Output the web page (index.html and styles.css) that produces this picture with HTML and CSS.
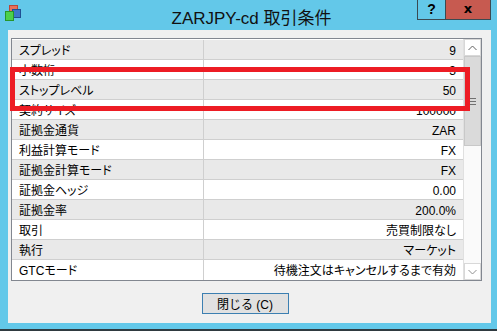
FILE: index.html
```html
<!DOCTYPE html>
<html lang="ja">
<head>
    <meta charset="UTF-8">
    <title>ZARJPY-cd 取引条件</title>
    <link rel="stylesheet" href="styles.css">
</head>
<body>

<div class="window">
    <div class="titlebar">
        <svg class="app-icon" width="18" height="18" viewBox="0 0 18 18">
            <rect x="5.5" y="1.5" width="8" height="7" fill="#e8705a" stroke="#b9473a"/>
            <rect x="8.5" y="5.5" width="8" height="8" fill="#3c78c8" stroke="#1f4f93"/>
            <rect x="1.5" y="7.5" width="8" height="9" fill="#4cd04a" stroke="#27962a"/>
        </svg>
        <div class="title">ZARJPY-cd 取引条件</div>
        <div class="caption-buttons">
            <div class="btn-help">?</div>
            <div class="btn-close">x</div>
        </div>
    </div>

    <div class="panel">
        <div class="listbox">
            <div class="rows">
                <div class="row"><span class="name">スプレッド</span><span class="value">9</span></div>
                <div class="row"><span class="name">小数桁</span><span class="value">3</span></div>
                <div class="row"><span class="name">ストップレベル</span><span class="value">50</span></div>
                <div class="row"><span class="name">契約サイズ</span><span class="value">100000</span></div>
                <div class="row"><span class="name">証拠金通貨</span><span class="value">ZAR</span></div>
                <div class="row"><span class="name">利益計算モード</span><span class="value">FX</span></div>
                <div class="row"><span class="name">証拠金計算モード</span><span class="value">FX</span></div>
                <div class="row"><span class="name">証拠金ヘッジ</span><span class="value">0.00</span></div>
                <div class="row"><span class="name">証拠金率</span><span class="value">200.0%</span></div>
                <div class="row"><span class="name">取引</span><span class="value">売買制限なし</span></div>
                <div class="row"><span class="name">執行</span><span class="value">マーケット</span></div>
                <div class="row"><span class="name">GTCモード</span><span class="value">待機注文はキャンセルするまで有効</span></div>
            </div>
            <div class="scrollbar">
                <div class="arrow arrow-up">
                    <svg width="9" height="6" viewBox="0 0 9 6"><path d="M0.5 5 L4.5 1 L8.5 5" fill="none" stroke="#606060"/></svg>
                </div>
                <div class="thumb"><span class="grip"></span></div>
                <div class="track"></div>
                <div class="arrow arrow-down">
                    <svg width="9" height="6" viewBox="0 0 9 6"><path d="M0.5 1 L4.5 5 L8.5 1" fill="none" stroke="#909090"/></svg>
                </div>
            </div>
        </div>

        <div class="footer">
            <button class="close-button">閉じる (C)</button>
        </div>

        <!-- 強調枠 -->
        <div class="highlight"></div>
    </div>
</div>

</body>
</html>
```

FILE: styles.css
```css
body {
    margin: 0;
    padding: 0;
    font-family: "Liberation Sans", "Noto Sans CJK JP", sans-serif;
    background-color: #63c8e9;
}
.window {
    width: 497px;
    height: 331px;
    box-sizing: border-box;
    background-color: #63c8e9;
    border-bottom: 2px solid #2f3a40;
    display: flex;
    flex-direction: column;
}
.titlebar {
    height: 30px;
    display: flex;
    align-items: flex-start;
    position: relative;
}
.app-icon {
    margin: 4px 0 0 4px;
}
.title {
    position: absolute;
    left: 0;
    right: 0;
    top: 4px;
    padding-left: 6px;
    text-align: center;
    font-family: "Liberation Sans", "Noto Sans CJK JP", sans-serif;
    font-size: 17px;
    color: #111;
    pointer-events: none;
}
.caption-buttons {
    margin-left: auto;
    margin-right: 6px;
    display: flex;
}
.btn-help,
.btn-close {
    height: 19px;
    border: 1px solid #3a4a52;
    border-top: none;
    font-weight: bold;
    font-size: 14px;
    text-align: center;
    line-height: 18px;
    color: #000;
}
.btn-help {
    width: 27px;
    border-right: none;
}
.btn-close {
    width: 44px;
    background-color: #c75a50;
    font-family: "DejaVu Sans", sans-serif;
    font-size: 13px;
}
.panel {
    margin: 0 6px 0 8px;
    height: 293px;
    background-color: #f0f0f0;
    padding: 8px 9px 0 3px;
    box-sizing: border-box;
    position: relative;
}
.listbox {
    height: 243px;
    box-sizing: border-box;
    border: 1px solid #828790;
    padding: 1px 0 0 0;
    background-color: #fff;
    display: flex;
}
.rows {
    flex: 1;
    display: flex;
    flex-direction: column;
}
.row {
    height: 20px;
    box-sizing: border-box;
    border-bottom: 1px solid #cfcfcf;
    display: flex;
    font-size: 12px;
    line-height: 19px;
    color: #000;
    font-feature-settings: "palt";
}
.row:nth-child(odd) {
    background-color: #e9e9e9;
}
.row:last-child {
    border-bottom: none;
}
.name {
    width: 192px;
    padding-top: 2px;
    padding-left: 7px;
    box-sizing: border-box;
    border-right: 1px solid #cfcfcf;
}
.value {
    flex: 1;
    padding-top: 2px;
    text-align: right;
    padding-right: 7px;
}
.scrollbar {
    width: 17px;
    margin-top: -1px;
    display: flex;
    flex-direction: column;
    background-color: #f0f0f0;
    border-left: 1px solid #e0e0e0;
}
.arrow {
    height: 17px;
    display: flex;
    align-items: center;
    justify-content: center;
    background-color: #fff;
    border: 1px solid #d8d8d8;
    box-sizing: border-box;
}
.thumb {
    height: 90px;
    background-color: #dadada;
    border: 1px solid #c8c8c8;
    box-sizing: border-box;
    display: flex;
    align-items: center;
    justify-content: center;
}
.grip {
    width: 7px;
    height: 5px;
    border-top: 1px solid #707070;
    border-bottom: 1px solid #707070;
    position: relative;
}
.grip::after {
    content: "";
    position: absolute;
    left: 0;
    right: 0;
    top: 2px;
    border-top: 1px solid #707070;
}
.track {
    flex: 1;
    background-color: #fafafa;
}
.footer {
    display: flex;
    justify-content: center;
    padding-top: 12px;
    padding-right: 3px;
}
.close-button {
    width: 87px;
    height: 21px;
    background-color: #e1e1e1;
    border: 1px solid #3c7fb1;
    font-family: "Liberation Sans", "Noto Sans CJK JP", sans-serif;
    font-size: 12px;
    color: #000;
    padding: 0;
}
.highlight {
    position: absolute;
    left: 2px;
    top: 37px;
    width: 460px;
    height: 44px;
    box-sizing: border-box;
    border: 5px solid #ed1c24;
}
```
